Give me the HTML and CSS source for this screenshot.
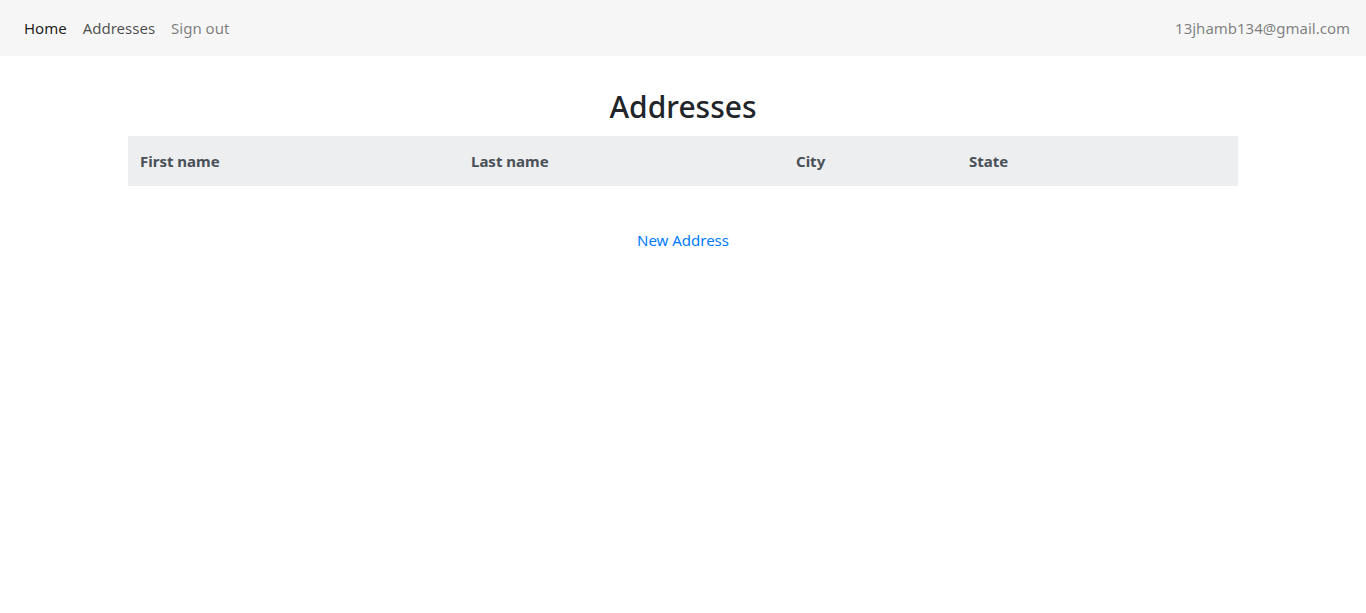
FILE: index.html
```html
<!DOCTYPE html>
<html>
<head>
<meta charset="utf-8">
<link rel="stylesheet" href="styles.css">
</head>
<body>
<nav class="navbar">
  <ul class="nav-links">
    <li><a class="nav-link active" href="#">Home</a></li>
    <li><a class="nav-link" href="#">Addresses</a></li>
    <li><a class="nav-link muted" href="#">Sign out</a></li>
  </ul>
  <span class="navbar-text">13jhamb134@gmail.com</span>
</nav>
<main class="container">
  <h2 class="title">Addresses</h2>
  <table class="table">
    <thead>
      <tr>
        <th class="c1">First name</th>
        <th class="c2">Last name</th>
        <th class="c3">City</th>
        <th class="c4">State</th>
      </tr>
    </thead>
  </table>
  <div class="actions"><a class="link" href="#">New Address</a></div>
</main>
</body>
</html>
```
FILE: styles.css
```css
* { box-sizing: border-box; }
body {
  margin: 0;
  font-family: "Noto Sans", "Open Sans", sans-serif;
  font-size: 15px;
  line-height: 24px;
  color: #212529;
  background: #fff;
}
.navbar {
  display: flex;
  align-items: center;
  justify-content: space-between;
  height: 56px;
  padding: 0 16px;
  background: #f6f6f6;
}
.nav-links {
  display: flex;
  list-style: none;
  margin: 0;
  padding: 0;
}
.nav-link {
  display: block;
  padding: 8px;
  text-decoration: none;
  color: rgba(0,0,0,.7);
}
.nav-link.active { color: rgba(0,0,0,.9); }
.nav-link.muted { color: rgba(0,0,0,.5); }
.navbar-text { color: rgba(0,0,0,.5); }
.container {
  width: 1110px;
  margin: 0 auto;
  padding-top: 32px;
}
.title {
  margin: 0 0 10px;
  text-align: center;
  font-size: 30px;
  font-weight: 500;
  line-height: 38px;
  color: #212529;
}
.table {
  width: 100%;
  border-collapse: collapse;
  margin-bottom: 16px;
}
.table th {
  background: #eceef0;
  color: #495057;
  text-align: left;
  font-weight: 700;
  padding: 13px 12px;
  height: 50px;
}
.c1 { width: 331px; }
.c2 { width: 325px; }
.c3 { width: 173px; }
.c4 { width: 281px; }
.actions {
  text-align: center;
  padding-top: 26px;
}
.link {
  color: #007bff;
  text-decoration: none;
}
```
